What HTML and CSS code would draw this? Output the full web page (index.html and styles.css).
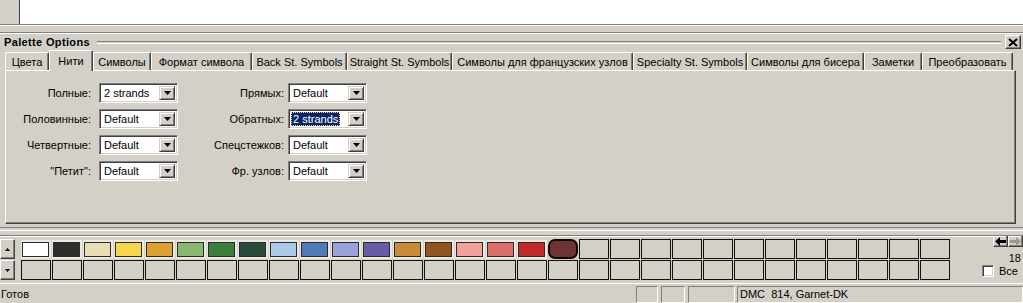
FILE: index.html
```html
<!DOCTYPE html>
<html lang="ru">
<head>
    <meta charset="UTF-8">
    <title>Palette Options</title>
    <link rel="stylesheet" href="styles.css">
</head>
<body>
    <div class="topbar">
        <div class="topbtn"></div>
    </div>
    <div class="band"></div>

    <div class="dock">
        <div class="titlerow">
            <span class="title">Palette Options</span>
            <div class="grip"></div>
            <div class="closebtn">
                <svg width="10" height="9" viewBox="0 0 10 9"><path d="M1 1 L9 8 M9 1 L1 8" stroke="#000" stroke-width="2"/></svg>
            </div>
        </div>

        <div class="tabs">
            <div class="tab" style="width:44px">Цвета</div>
            <div class="tab active" style="width:44px">Нити</div>
            <div class="tab" style="width:58px">Символы</div>
            <div class="tab" style="width:101px">Формат символа</div>
            <div class="tab" style="width:95px">Back St. Symbols</div>
            <div class="tab" style="width:105px">Straight St. Symbols</div>
            <div class="tab" style="width:181px">Символы для французских узлов</div>
            <div class="tab" style="width:114px">Specialty St. Symbols</div>
            <div class="tab" style="width:117px">Символы для бисера</div>
            <div class="tab" style="width:58px">Заметки</div>
            <div class="tab" style="width:91px">Преобразовать</div>
        </div>

        <div class="panel">
            <div class="form">
                <label class="lbl">Полные:</label>
                <div class="combo"><span class="val">2 strands</span><span class="drop"><svg width="7" height="4" viewBox="0 0 7 4"><path d="M0 0 H7 L3.5 4 Z" fill="#000"/></svg></span></div>
                <label class="lbl lbl2">Прямых:</label>
                <div class="combo"><span class="val">Default</span><span class="drop"><svg width="7" height="4" viewBox="0 0 7 4"><path d="M0 0 H7 L3.5 4 Z" fill="#000"/></svg></span></div>

                <label class="lbl">Половинные:</label>
                <div class="combo"><span class="val">Default</span><span class="drop"><svg width="7" height="4" viewBox="0 0 7 4"><path d="M0 0 H7 L3.5 4 Z" fill="#000"/></svg></span></div>
                <label class="lbl lbl2">Обратных:</label>
                <div class="combo"><span class="val sel">2 strands</span><span class="drop"><svg width="7" height="4" viewBox="0 0 7 4"><path d="M0 0 H7 L3.5 4 Z" fill="#000"/></svg></span></div>

                <label class="lbl">Четвертные:</label>
                <div class="combo"><span class="val">Default</span><span class="drop"><svg width="7" height="4" viewBox="0 0 7 4"><path d="M0 0 H7 L3.5 4 Z" fill="#000"/></svg></span></div>
                <label class="lbl lbl2">Спецстежков:</label>
                <div class="combo"><span class="val">Default</span><span class="drop"><svg width="7" height="4" viewBox="0 0 7 4"><path d="M0 0 H7 L3.5 4 Z" fill="#000"/></svg></span></div>

                <label class="lbl">"Петит":</label>
                <div class="combo"><span class="val">Default</span><span class="drop"><svg width="7" height="4" viewBox="0 0 7 4"><path d="M0 0 H7 L3.5 4 Z" fill="#000"/></svg></span></div>
                <label class="lbl lbl2">Фр. узлов:</label>
                <div class="combo"><span class="val">Default</span><span class="drop"><svg width="7" height="4" viewBox="0 0 7 4"><path d="M0 0 H7 L3.5 4 Z" fill="#000"/></svg></span></div>
            </div>
        </div>
    </div>

    <div class="splitter"></div>

    <div class="palette">
        <div class="scroll">
            <div class="sbtn up"><svg width="5" height="3" viewBox="0 0 5 3"><path d="M0 3 H5 L2.5 0 Z" fill="#000"/></svg></div>
            <div class="sbtn down"><svg width="5" height="3" viewBox="0 0 5 3"><path d="M0 0 H5 L2.5 3 Z" fill="#000"/></svg></div>
        </div>
        <div class="grid" id="grid"></div>
        <div class="side">
            <div class="arrows">
                <div class="abtn"><svg width="11" height="9" viewBox="0 0 11 9"><path d="M0 4.5 L5 0 V3 H11 V6 H5 V9 Z" fill="#000"/></svg></div>
                <div class="abtn"><svg width="11" height="9" viewBox="0 0 11 9"><path d="M11 4.5 L6 0 V3 H0 V6 H6 V9 Z" fill="#9a9890"/></svg></div>
            </div>
            <div class="count">18</div>
            <div class="all"><span class="chk"></span>Все</div>
        </div>
    </div>

    <div class="statusbar">
        <div class="stext">Готов</div>
        <div class="spanel" style="width:22px"></div>
        <div class="spanel" style="width:24px"></div>
        <div class="spanel" style="width:47px"></div>
        <div class="spanel wide">DMC&nbsp; 814, Garnet-DK</div>
    </div>

    <script>
        var colors = ['#ffffff', '#2b2e29', '#e9ddb6', '#f6d64c', '#d9a232', '#89b870',
                      '#3b7e3c', '#2d4b3d', '#a8c9e9', '#5079b7', '#9ba1dc', '#6a5ba8',
                      '#c98a3a', '#935421', '#f1a29a', '#dc6e69', '#c22a2a', '#6e3432'];
        var grid = document.getElementById('grid');
        for (var r = 0; r < 2; r++) {
            for (var i = 0; i < 30; i++) {
                var cell = document.createElement('div');
                if (r === 0 && i < 17) {
                    cell.className = 'cell sw';
                    var c = document.createElement('div');
                    c.className = 'chip';
                    c.style.background = colors[i];
                    cell.appendChild(c);
                } else if (r === 0 && i === 17) {
                    cell.className = 'cell cur';
                    var c2 = document.createElement('div');
                    c2.className = 'curchip';
                    c2.style.background = colors[i];
                    cell.appendChild(c2);
                } else {
                    cell.className = 'cell empty' + (r === 1 ? ' tall' : '');
                }
                grid.appendChild(cell);
            }
        }
    </script>
</body>
</html>
```

FILE: styles.css
```css
* {
    box-sizing: border-box;
}
body {
    margin: 0;
    width: 1023px;
    height: 303px;
    overflow: hidden;
    background: #d4d0c8;
    font-family: "Liberation Sans", Arial, sans-serif;
    font-size: 11px;
    color: #000;
}
.topbar {
    height: 25px;
    background: #fff;
    border-bottom: 1px solid #808080;
}
.topbtn {
    width: 20px;
    height: 24px;
    background: #d4d0c8;
    border-right: 1px solid #404040;
}
.band {
    height: 8px;
    border-top: 1px solid #fff;
    border-bottom: 1px solid #808080;
}
.titlerow {
    height: 17px;
    display: flex;
    align-items: center;
    padding-left: 4px;
    border-top: 1px solid #fff;
}
.title {
    font-weight: bold;
    font-size: 11px;
    letter-spacing: 0.35px;
}
.grip {
    flex: 1;
    height: 3px;
    margin: 1px 4px 0 7px;
    border-top: 1px solid #808080;
    border-bottom: 1px solid #fff;
}
.closebtn {
    width: 16px;
    height: 14px;
    margin-right: 2px;
    display: flex;
    align-items: center;
    justify-content: center;
    border: 1px solid;
    border-color: #fff #404040 #404040 #fff;
    box-shadow: inset -1px -1px 0 #808080;
}
.tabs {
    display: flex;
    align-items: flex-end;
    height: 20px;
    padding-left: 5px;
    position: relative;
    z-index: 1;
}
.tab {
    height: 18px;
    display: flex;
    align-items: center;
    justify-content: center;
    white-space: nowrap;
    border-top: 1px solid #fff;
    border-left: 1px solid #fff;
    border-right: 1px solid #404040;
    box-shadow: inset -1px 0 0 #808080;
    border-radius: 2px 2px 0 0;
    padding-top: 1px;
}
.tab.active {
    height: 21px;
    margin-bottom: -1px;
    background: #d4d0c8;
    padding-bottom: 2px;
}
.panel {
    margin-left: 5px;
    width: 1011px;
    height: 154px;
    border: 1px solid;
    border-color: #fff #404040 #404040 #fff;
    box-shadow: inset -1px -1px 0 #808080;
}
.form {
    display: grid;
    grid-template-columns: 93px 79px 110px 79px;
    grid-auto-rows: 20px;
    row-gap: 6px;
    padding-top: 12px;
}
.lbl {
    display: flex;
    align-items: center;
    justify-content: flex-end;
    padding-right: 8px;
    white-space: nowrap;
}
.lbl2 {
    padding-right: 4px;
}
.combo {
    display: flex;
    height: 20px;
    background: #fff;
    border: 1px solid;
    border-color: #808080 #fff #fff #808080;
    box-shadow: inset 1px 1px 0 #404040, inset -1px -1px 0 #d4d0c8;
    padding: 2px;
}
.val {
    flex: 1;
    display: flex;
    align-items: center;
    padding-left: 2px;
    white-space: nowrap;
}
.val.sel {
    background: #0a246a;
    color: #fff;
    outline: 1px dotted #f5d18a;
    outline-offset: -1px;
    margin-right: 8px;
}
.drop {
    width: 16px;
    display: flex;
    align-items: center;
    justify-content: center;
    background: #d4d0c8;
    border: 1px solid;
    border-color: #d4d0c8 #404040 #404040 #d4d0c8;
    box-shadow: inset 1px 1px 0 #fff, inset -1px -1px 0 #808080;
}
.splitter {
    height: 9px;
    border-bottom: 1px solid #808080;
    position: relative;
}
.splitter::before {
    content: "";
    display: block;
    margin-top: 3px;
    height: 2px;
    border-top: 1px solid #808080;
    border-bottom: 1px solid #fff;
}
.palette {
    height: 47px;
    display: flex;
    border-top: 1px solid #fff;
}
.scroll {
    width: 15px;
    padding-top: 2px;
    display: flex;
    flex-direction: column;
    gap: 1px;
}
.sbtn {
    width: 15px;
    height: 20px;
    display: flex;
    align-items: center;
    justify-content: center;
    border: 1px solid;
    border-color: #fff #404040 #404040 #fff;
    box-shadow: inset -1px -1px 0 #808080;
}
.grid {
    margin-left: 6px;
    padding-top: 3px;
    display: grid;
    grid-template-columns: repeat(30, 30px);
    grid-template-rows: 19px 20px;
    column-gap: 1px;
    row-gap: 1px;
}
.cell.empty {
    border: 1px solid #111;
    margin-top: -1px;
}
.cell.tall {
    margin-top: 0;
}
.cell.sw {
    padding: 2px 2px 2px 1px;
    background: #ece9e2;
}
.chip {
    width: 100%;
    height: 100%;
    border: 1px solid #2a2a2a;
}
.cell.cur {
    margin-top: -1px;
}
.curchip {
    width: 100%;
    height: 100%;
    border: 2px solid #140606;
    border-radius: 7px;
}
.side {
    flex: 1;
    display: flex;
    flex-direction: column;
    align-items: flex-end;
    margin-top: -2px;
    padding-right: 1px;
}
.arrows {
    display: flex;
    margin-right: -1px;
}
.abtn {
    width: 15px;
    height: 12px;
    display: flex;
    align-items: center;
    justify-content: center;
    border: 1px solid;
    border-color: #fff #404040 #404040 #fff;
    box-shadow: inset -1px -1px 0 #808080;
}
.count {
    margin-top: 5px;
    line-height: 12px;
    margin-right: 1px;
}
.all {
    display: flex;
    align-items: center;
    gap: 5px;
    margin-top: 1px;
    margin-right: 4px;
    line-height: 12px;
}
.chk {
    width: 12px;
    height: 12px;
    background: #fff;
    border: 1px solid;
    border-color: #808080 #fff #fff #808080;
    box-shadow: inset 1px 1px 0 #404040, inset -1px -1px 0 #d4d0c8;
}
.statusbar {
    height: 23px;
    display: flex;
    align-items: center;
    border-top: 1px solid #fff;
    padding-bottom: 2px;
}
.stext {
    flex: 1;
    padding-left: 1px;
}
.spanel {
    height: 17px;
    margin-left: 3px;
    border: 1px solid;
    border-color: #808080 #fff #fff #808080;
    display: flex;
    align-items: center;
    padding-left: 2px;
    white-space: nowrap;
}
.spanel.wide {
    width: 286px;
    margin-left: 2px;
}
```
